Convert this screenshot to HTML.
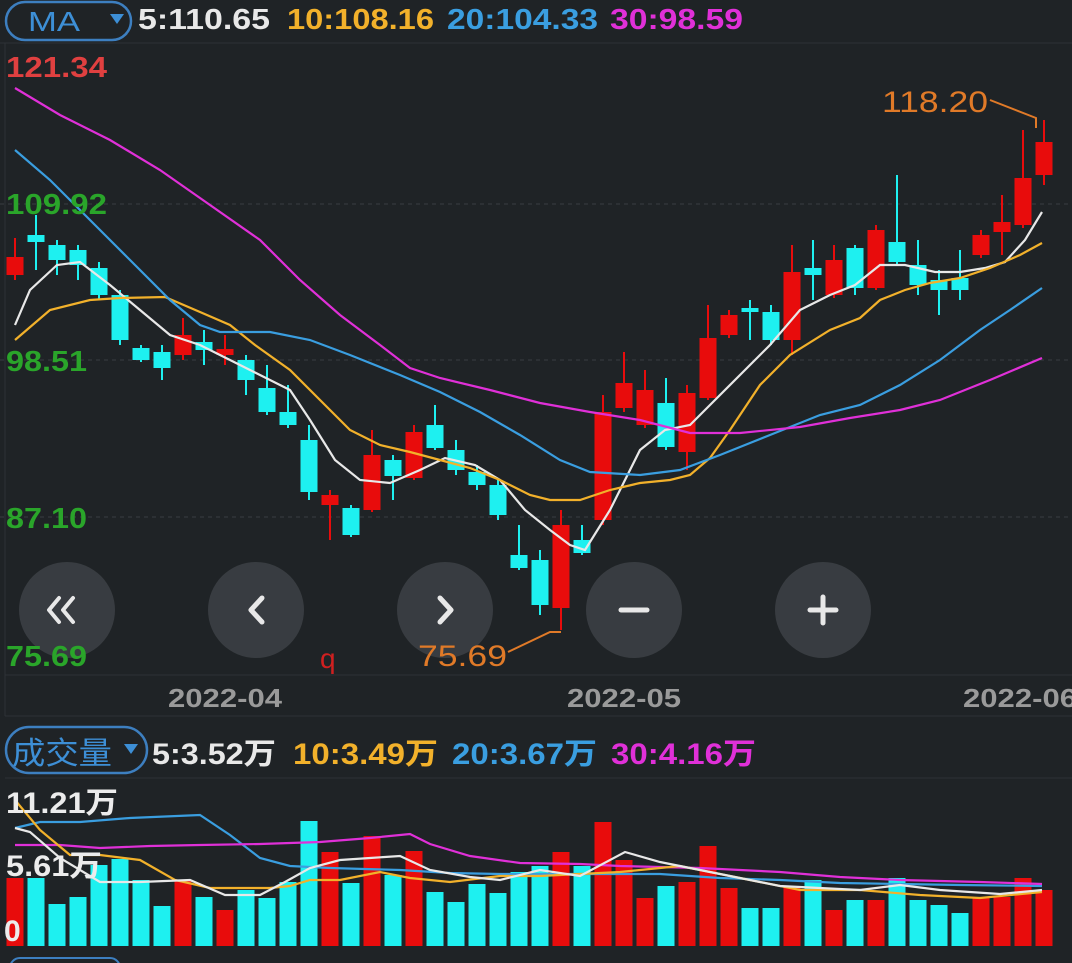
<!DOCTYPE html><html><head><meta charset="utf-8"><style>
body{margin:0;background:#1f2326;width:1072px;height:963px;overflow:hidden;font-family:"Liberation Sans","Noto Sans CJK SC",sans-serif;}
svg{position:absolute;left:0;top:0}
</style></head><body>
<svg id="s" width="1072" height="963" xmlns="http://www.w3.org/2000/svg" font-family="Liberation Sans, Noto Sans CJK SC, sans-serif">
<line x1="0" y1="43" x2="1072" y2="43" stroke="#2e3236"/>
<line x1="5" y1="675" x2="1072" y2="675" stroke="#2e3236"/>
<line x1="5" y1="716" x2="1072" y2="716" stroke="#2e3236"/>
<line x1="5" y1="778" x2="1072" y2="778" stroke="#2e3236"/>
<line x1="5" y1="43" x2="5" y2="716" stroke="#2e3236"/>
<g stroke="#3a3e42" stroke-dasharray="4 4"><line x1="0" y1="204" x2="1072" y2="204"/><line x1="0" y1="360" x2="1072" y2="360"/><line x1="0" y1="517" x2="1072" y2="517"/></g>
<rect x="6" y="2" width="125" height="38" rx="19" fill="none" stroke="#3d7fc0" stroke-width="2.5"/>
<text x="28" y="31" fill="#3d8fd6" font-size="28" textLength="52" lengthAdjust="spacingAndGlyphs">MA</text>
<path d="M110 14 L124 14 L117 24Z" fill="#3d8fd6"/>
<g font-size="29" font-weight="bold">
<text x="138" y="29" fill="#e8e8e8" textLength="132" lengthAdjust="spacingAndGlyphs">5:110.65</text>
<text x="287" y="29" fill="#f2b12b" textLength="147" lengthAdjust="spacingAndGlyphs">10:108.16</text>
<text x="447" y="29" fill="#3a9ee0" textLength="151" lengthAdjust="spacingAndGlyphs">20:104.33</text>
<text x="610" y="29" fill="#e030d8" textLength="133" lengthAdjust="spacingAndGlyphs">30:98.59</text>
</g>
<g id="cand"></g>
<g id="ma" fill="none" stroke-width="2.2"></g>
<g fill="#3b3f43" fill-opacity="0.92">
<circle cx="67" cy="610" r="48"/><circle cx="256" cy="610" r="48"/><circle cx="445" cy="610" r="48"/><circle cx="634" cy="610" r="48"/><circle cx="823" cy="610" r="48"/></g>
<g stroke="#e8e8e8" stroke-width="5" fill="none" stroke-linecap="round" stroke-linejoin="round">
<path d="M59 598 L49 610 L59 622 M73 598 L63 610 L73 622" stroke-width="4"/>
<path d="M262 598 L251 610 L262 622"/>
<path d="M440 598 L451 610 L440 622"/>
<path d="M621 610 L647 610"/>
<path d="M810 610 L836 610 M823 597 L823 623"/></g>
<g font-size="29" font-weight="bold">
<text x="6" y="77" fill="#e04040" textLength="101" lengthAdjust="spacingAndGlyphs">121.34</text>
<text x="6" y="214" fill="#2aa52a" textLength="101" lengthAdjust="spacingAndGlyphs">109.92</text>
<text x="6" y="371" fill="#2aa52a" textLength="81" lengthAdjust="spacingAndGlyphs">98.51</text>
<text x="6" y="528" fill="#2aa52a" textLength="81" lengthAdjust="spacingAndGlyphs">87.10</text>
<text x="6" y="666" fill="#2aa52a" textLength="81" lengthAdjust="spacingAndGlyphs">75.69</text>
</g>
<text x="320" y="668" fill="#d02020" font-size="28">q</text>
<text x="882" y="112" fill="#e07a28" font-size="30" textLength="106" lengthAdjust="spacingAndGlyphs">118.20</text>
<path d="M990 100 L1036 118 L1036 128" stroke="#e07a28" stroke-width="2" fill="none"/>
<text x="418" y="666" fill="#e07a28" font-size="30" textLength="89" lengthAdjust="spacingAndGlyphs">75.69</text>
<path d="M508 652 L550 632 L561 632" stroke="#e07a28" stroke-width="2" fill="none"/>
<g fill="#9a9a9a" font-size="26" font-weight="bold">
<text x="168" y="707" textLength="114" lengthAdjust="spacingAndGlyphs">2022-04</text>
<text x="567" y="707" textLength="114" lengthAdjust="spacingAndGlyphs">2022-05</text>
<text x="963" y="707" textLength="114" lengthAdjust="spacingAndGlyphs">2022-06</text></g>
<rect x="6" y="727" width="141" height="46" rx="23" fill="none" stroke="#3d7fc0" stroke-width="2.5"/>
<text x="12" y="764" fill="#3d8fd6" font-size="31" textLength="100" lengthAdjust="spacingAndGlyphs">成交量</text>
<path d="M124 744 L138 744 L131 754Z" fill="#3d8fd6"/>
<g font-size="30" font-weight="bold">
<text x="152" y="764" fill="#e8e8e8" textLength="124" lengthAdjust="spacingAndGlyphs">5:3.52万</text>
<text x="293" y="764" fill="#f2b12b" textLength="145" lengthAdjust="spacingAndGlyphs">10:3.49万</text>
<text x="452" y="764" fill="#3a9ee0" textLength="145" lengthAdjust="spacingAndGlyphs">20:3.67万</text>
<text x="611" y="764" fill="#e030d8" textLength="145" lengthAdjust="spacingAndGlyphs">30:4.16万</text></g>
<g id="vol"></g>
<g id="vma" fill="none" stroke-width="2.2"></g>
<g fill="#ececec" font-size="30" font-weight="bold">
<text x="6" y="813" textLength="112" lengthAdjust="spacingAndGlyphs">11.21万</text>
<text x="6" y="876" textLength="96" lengthAdjust="spacingAndGlyphs">5.61万</text>
<text x="4" y="941">0</text></g>
<rect x="10" y="958" width="110" height="20" rx="10" fill="none" stroke="#3d7fc0" stroke-width="2"/>
</svg>
<script>
var R="#e80c0c",C="#1ef0f0",S=21;
var c=[[1,257,275,238,280],[0,235,242,215,270],[0,245,260,240,275],[0,250,265,245,280],[0,268,295,262,300],[0,295,340,290,345],[0,348,360,345,362],[0,352,368,345,380],[1,335,355,318,360],[0,342,350,330,365],[1,349,355,335,365],[0,360,380,355,395],[0,388,412,365,415],[0,412,425,385,428],[0,440,492,425,500],[1,495,505,490,540],[0,508,535,505,537],[1,455,510,430,512],[0,460,476,455,500],[1,432,478,425,480],[0,425,448,405,450],[0,450,470,440,475],[0,472,485,465,490],[0,485,515,480,520],[0,555,568,525,570],[0,560,605,550,615],[1,525,608,510,630],[0,540,553,525,555],[1,412,520,395,525],[1,383,408,352,412],[1,390,425,370,428],[0,403,447,378,450],[1,393,452,385,470],[1,338,398,305,400],[1,315,335,310,338],[0,308,312,300,340],[0,312,340,305,345],[1,272,340,245,355],[0,268,275,240,300],[1,260,295,245,298],[0,248,288,245,295],[1,230,288,225,290],[0,242,262,175,265],[0,265,285,240,295],[0,280,290,270,315],[0,278,290,250,300],[1,235,255,230,258],[1,222,232,195,255],[1,178,225,130,228],[1,142,175,120,185]];
var v=[[1,878],[0,878],[0,904],[0,897],[0,865],[0,859],[0,880],[0,906],[1,880],[0,897],[1,910],[0,890],[0,898],[0,882],[0,821],[1,852],[0,883],[1,836],[0,875],[1,851],[0,892],[0,902],[0,884],[0,893],[0,872],[0,866],[1,852],[0,866],[1,822],[1,860],[1,898],[0,886],[1,882],[1,846],[1,888],[0,908],[0,908],[1,887],[0,880],[1,910],[0,900],[1,900],[0,878],[0,900],[0,905],[0,913],[1,897],[1,897],[1,878],[1,890]];
var h="";c.forEach(function(d,i){var x=15+i*S,col=d[0]?R:C;h+='<line x1="'+x+'" x2="'+x+'" y1="'+d[3]+'" y2="'+d[4]+'" stroke="'+col+'" stroke-width="2"/><rect x="'+(x-8.5)+'" y="'+d[1]+'" width="17" height="'+Math.max(3,d[2]-d[1])+'" fill="'+col+'"/>';});
document.getElementById("cand").innerHTML=h;
h="";v.forEach(function(d,i){var x=15+i*S;h+='<rect x="'+(x-8.5)+'" y="'+d[1]+'" width="17" height="'+(946-d[1])+'" fill="'+(d[0]?R:C)+'"/>';});
document.getElementById("vol").innerHTML=h;
function pl(p,col){return '<polyline stroke="'+col+'" points="'+p+'"/>';}
document.getElementById("ma").innerHTML=
pl("15,325 30,290 57,265 80,262 110,285 140,310 170,335 200,345 230,360 260,375 290,390 310,420 335,460 360,480 390,483 420,470 445,458 475,465 500,480 525,510 550,530 570,545 585,550 610,510 640,450 665,430 690,425 710,405 740,375 770,345 800,310 830,295 855,285 880,265 905,265 935,272 960,272 985,268 1005,262 1025,240 1042,212","#e8e8e8")+
pl("15,340 50,310 90,300 120,298 165,297 200,312 230,325 255,345 290,370 320,400 350,430 380,445 410,452 440,460 470,468 500,480 530,495 550,500 580,500 610,490 640,483 670,480 690,475 710,458 730,430 760,385 790,355 830,330 860,318 880,300 905,290 930,283 960,278 990,268 1020,255 1042,243","#f2b12b")+
pl("15,150 50,180 80,210 110,240 140,270 170,300 200,325 220,332 270,332 310,340 350,355 400,375 440,392 480,412 520,435 560,460 590,472 640,475 680,470 720,455 770,435 820,415 860,405 900,385 940,360 980,330 1010,310 1042,288","#3a9ee0")+
pl("15,88 60,115 110,140 160,170 210,205 260,240 300,280 340,315 380,345 410,368 440,378 490,390 540,403 590,412 640,420 690,433 740,433 800,427 850,418 900,410 940,400 990,380 1042,358","#e030d8");
document.getElementById("vma").innerHTML=
pl("15,828 40,822 80,822 130,818 200,815 230,835 260,858 290,866 330,868 400,870 450,873 500,874 560,874 600,874 660,874 720,878 780,880 840,883 900,884 960,885 1042,886","#3a9ee0")+
pl("15,845 60,845 100,848 150,846 200,845 260,844 320,842 370,838 410,834 430,844 470,856 520,863 580,864 620,866 700,868 780,872 840,877 900,880 980,882 1042,884","#e030d8")+
pl("15,800 40,830 70,855 100,855 140,860 175,880 210,888 270,888 290,886 310,880 340,880 380,872 410,878 450,882 500,876 540,876 580,874 620,872 680,866 740,878 800,890 860,890 920,895 980,898 1042,892","#f2b12b")+
pl("15,828 30,832 60,858 100,882 140,882 190,880 225,895 260,895 285,882 310,868 340,860 370,858 400,856 430,870 470,877 500,880 540,870 580,876 625,852 660,862 700,870 740,878 780,886 820,888 860,890 900,885 940,890 1000,894 1042,890","#e8e8e8");
</script>
</body></html>
